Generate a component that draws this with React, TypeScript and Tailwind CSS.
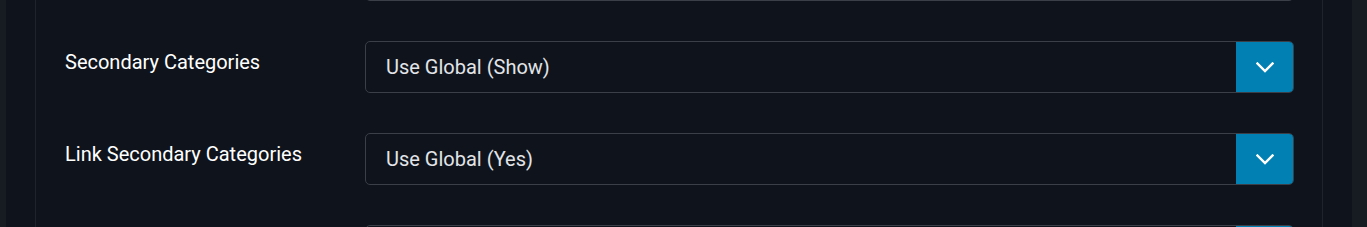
import React from "react";

const rows = [
  { label: "Category", value: "Use Global (Show)" },
  { label: "Secondary Categories", value: "Use Global (Show)" },
  { label: "Link Secondary Categories", value: "Use Global (Yes)" },
  { label: "Author", value: "Use Global (Show)" },
];

function Chevron() {
  return (
    <svg width="18" height="11" viewBox="0 0 18 11" fill="none">
      <path d="M1.5 1.5 L9 9 L16.5 1.5" stroke="white" strokeWidth="2.4" strokeLinecap="square" />
    </svg>
  );
}

export default function App() {
  return (
    <div
      className="flex h-[227px] w-full overflow-hidden bg-[#171b22]"
      style={{ fontFamily: "Roboto, 'Liberation Sans', sans-serif" }}
    >
      <div className="ml-[6px] flex w-[1346px] bg-[#0f141c] pl-[29px] pr-[29px]">
        <div className="flex-1 border-l border-r border-[#1f242c] pl-[29px] pr-[28px]">
          <div className="-mt-[51px] flex flex-col gap-[40px]">
            {rows.map((r, i) => (
              <div key={i} className="flex">
                <div className="w-[300px] pt-[6px] text-[20px] leading-[30px] text-white">{r.label}</div>
                <div className="flex h-[52px] flex-1 rounded-[5px] border border-[#3b4048] overflow-hidden">
                  <div className="flex flex-1 items-center pl-[20px] text-[20px] text-[#e2e4e8]">{r.value}</div>
                  <div className="flex w-[57px] items-center justify-center bg-[#0080b3]">
                    <Chevron />
                  </div>
                </div>
              </div>
            ))}
          </div>
        </div>
      </div>
    </div>
  );
}
